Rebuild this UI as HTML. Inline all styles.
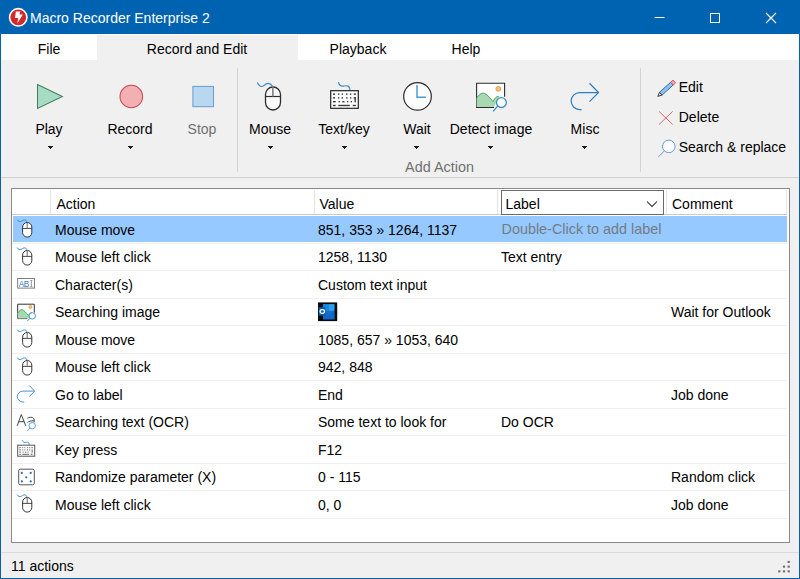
<!DOCTYPE html>
<html><head><meta charset="utf-8">
<style>
*{margin:0;padding:0;box-sizing:border-box}
html,body{width:800px;height:579px;overflow:hidden;background:#f0f0f0}
body{position:relative;font-family:"Liberation Sans",sans-serif;font-size:14px;color:#000}
.a{position:absolute}
.t{position:absolute;white-space:nowrap;line-height:16px;font-size:14px}
.c{text-align:center;width:120px}
svg{position:absolute;overflow:visible}
#title{left:0;top:0;width:800px;height:34px;background:#0063b1}
#bl{left:0;top:0;width:1px;height:579px;background:#0063b1}
#br{left:799px;top:0;width:1px;height:579px;background:#0063b1}
#bb{left:0;top:578px;width:800px;height:1px;background:#0063b1}
#tabs{left:1px;top:34px;width:798px;height:26px;background:#fff}
#tabsel{left:97px;top:35px;width:201px;height:26px;background:#f0f0f0}
#ribbot{left:1px;top:177px;width:798px;height:1px;background:#d0d0d0}
.sep{position:absolute;width:1px;background:#d3d3d3}
.dd{position:absolute;width:0;height:0;border-left:2.5px solid transparent;border-right:2.5px solid transparent;border-top:3px solid #1a1a1a}
#tbl{left:11px;top:188px;width:779px;height:355px;border:1px solid #8a8a8a;background:#fff}
.hsep{position:absolute;top:190px;width:1px;height:24px;background:#e5e5e5}
.row{position:absolute;left:12px;width:775px;height:1px;background:#f0f0f0}
#status{left:1px;top:552px;width:798px;height:1px;background:#dcdcdc}
</style></head><body>
<div class="a" id="title"></div>
<div class="a" id="bl"></div><div class="a" id="br"></div><div class="a" id="bb"></div>

<!-- app icon -->
<svg style="left:0;top:0" width="40" height="34">
  <circle cx="18.25" cy="17.35" r="8.7" fill="#d3292c" stroke="#fff" stroke-width="1.6"/>
  <path d="M15.9 11.6 L20.4 11.6 L19.3 14.5 L22.9 14.5 L17.3 23.5 L18.3 17.9 L15 17.9 Z" fill="#fff"/>
</svg>
<div class="t" style="left:30px;top:10px;font-size:14px;line-height:16px;color:#fff">Macro Recorder Enterprise 2</div>

<!-- window controls -->
<svg style="left:0;top:0" width="800" height="34">
  <line x1="654.5" y1="17.5" x2="664.5" y2="17.5" stroke="#fff" stroke-width="1"/>
  <rect x="710.5" y="13.5" width="9" height="9" fill="none" stroke="#fff" stroke-width="1"/>
  <path d="M766 13 L776 23 M776 13 L766 23" stroke="#fff" stroke-width="1.1"/>
</svg>

<!-- tabs -->
<div class="a" id="tabs"></div>
<div class="a" id="tabsel"></div>
<div class="t c" style="left:-11px;top:41px">File</div>
<div class="t c" style="left:137px;top:41px">Record and Edit</div>
<div class="t c" style="left:298px;top:41px">Playback</div>
<div class="t c" style="left:406px;top:41px">Help</div>

<!-- ribbon -->
<div class="a" id="ribbot"></div>
<div class="sep" style="left:237px;top:68px;height:104px"></div>
<div class="sep" style="left:640px;top:68px;height:104px"></div>

<!-- big icons -->
<svg style="left:0;top:0" width="800" height="180">
  <!-- play -->
  <path d="M37.5 84.5 L62.4 96.5 L37.5 108.5 Z" fill="#a7dbc3" stroke="#427f63" stroke-width="1.05"/>
  <!-- record -->
  <circle cx="131.3" cy="96.5" r="11.3" fill="#f2b0b2" stroke="#c9474c" stroke-width="1.05"/>
  <!-- stop -->
  <rect x="192.9" y="86.4" width="20.6" height="20.3" fill="#b9d8f0" stroke="#6c9fcf" stroke-width="1.05"/>
  <!-- mouse -->
  <rect x="265.5" y="87" width="15" height="23" rx="7.5" fill="#fafafa" stroke="#2e2e2e" stroke-width="1.3"/>
  <line x1="265.5" y1="96.5" x2="280.5" y2="96.5" stroke="#2e2e2e" stroke-width="1.2"/>
  <line x1="272.9" y1="87" x2="272.9" y2="96.5" stroke="#777" stroke-width="1.5"/>
  <path d="M257.3 82.6 C259 86.5 261.5 87.5 264 85.5 C266.5 83.5 269 81.5 272.9 86.6" fill="none" stroke="#3b8ccc" stroke-width="1.2"/>
  <!-- keyboard -->
  <rect x="330.7" y="90.7" width="27.6" height="17.6" fill="#fff" stroke="#222" stroke-width="1.2"/>
  <g fill="#3a3a3a">
    <rect x="332.9" y="93.4" width="2.2" height="1.4"/><rect x="337.9" y="93.4" width="1.4" height="1.4"/><rect x="341.6" y="93.4" width="1.4" height="1.4"/><rect x="346.1" y="93.4" width="1.4" height="1.4"/><rect x="349.9" y="93.4" width="1.4" height="1.4"/><rect x="353.7" y="93.4" width="2.2" height="1.4"/>
    <rect x="332.9" y="97.2" width="2.2" height="1.4"/><rect x="337.9" y="97.2" width="1.4" height="1.4"/><rect x="341.6" y="97.2" width="1.4" height="1.4"/><rect x="346.1" y="97.2" width="1.4" height="1.4"/><rect x="349.9" y="97.2" width="1.4" height="1.4"/><rect x="353.7" y="97.2" width="2.2" height="1.4"/><rect x="354.5" y="97.2" width="1.4" height="5.2"/>
    <rect x="332.9" y="101" width="2.8" height="1.4"/><rect x="338.5" y="101" width="1.4" height="1.4"/><rect x="342.3" y="101" width="2.2" height="1.4"/><rect x="346.9" y="101" width="1.4" height="1.4"/><rect x="350.6" y="101" width="1.4" height="1.4"/>
    <rect x="332.9" y="104.8" width="2.8" height="1.4"/><rect x="338.3" y="104.8" width="11.5" height="1.4"/><rect x="352.7" y="104.8" width="3.2" height="1.4"/>
  </g>
  <path d="M338.5 82.2 C339 85.5 341 86.6 344 86 C347 85.4 349.9 85.5 349.9 90" fill="none" stroke="#3b8ccc" stroke-width="1.2"/>
  <!-- clock -->
  <circle cx="417.5" cy="96.4" r="13.8" fill="#fdfdfd" stroke="#2a2a2a" stroke-width="1.2"/>
  <path d="M417 85 L417 97.2 L426 97.2" fill="none" stroke="#4b9ad3" stroke-width="1.5"/>
  <!-- detect image -->
  <path d="M504.6 96.7 L504.6 83.3 L476.6 83.3 L476.6 107.5 L494 107.5" fill="#fff" stroke="#2b2b2b" stroke-width="1.1"/>
  <path d="M476.6 98.2 C479 94.5 481.5 93 483.5 93.2 C486.5 93.4 490 98 493 101.8 C494.5 98 496.5 96.3 499.2 96.4 L497 101 L494 107 L476.6 107 Z" fill="#a9d9b3"/>
  <path d="M476.6 98.2 C479 94.5 481.5 93 483.5 93.2 C486.5 93.4 490 98 493 101.8 M493 101.8 C494.5 98 496.5 96.3 499.2 96.4" fill="none" stroke="#3ca356" stroke-width="1"/>
  <circle cx="498.3" cy="88.8" r="2.4" fill="#f9c27a" stroke="#e9913f" stroke-width="0.9"/>
  <circle cx="501.4" cy="102.6" r="4.9" fill="#fff" stroke="#3a8cc8" stroke-width="1.3"/>
  <line x1="497.6" y1="106.2" x2="493.2" y2="111.4" stroke="#3a8cc8" stroke-width="1.3"/>
  <!-- misc arrow -->
  <path d="M581.6 109.5 L579.6 109.5 A8.45 8.45 0 0 1 579.6 92.6 L598.3 92.6 M589.5 83.3 L598.5 92.6 L589.5 101.6" fill="none" stroke="#2d7dc4" stroke-width="1.25"/>
  <!-- pencil -->
  <g transform="translate(666.4 88.6) rotate(-42)">
    <rect x="-7.6" y="-1.9" width="15" height="3.8" fill="#88c4f4" stroke="#2f5f90" stroke-width="0.85"/>
    <rect x="7.4" y="-1.9" width="3.2" height="3.8" fill="#f5a0a6" stroke="#c9545c" stroke-width="0.85"/>
    <path d="M-7.6 -1.9 L-11.6 0 L-7.6 1.9 Z" fill="#e0dccf" stroke="#333" stroke-width="0.85"/>
  </g>
  <!-- delete x -->
  <path d="M659 111.4 L672.7 124.5 M672.7 111.4 L659 124.5" stroke="#d95a5c" stroke-width="0.9"/>
  <!-- search -->
  <circle cx="668.8" cy="146.4" r="6.3" fill="#fff" stroke="#5a9ad4" stroke-width="0.95"/>
  <line x1="664.4" y1="150.9" x2="658.3" y2="156.9" stroke="#5a9ad4" stroke-width="0.95"/>
</svg>

<div class="t c" style="left:-11px;top:121px">Play</div>
<svg style="left:48px;top:146px" width="5" height="3" shape-rendering="crispEdges"><rect x="0" y="0" width="5" height="1" fill="#1a1a1a"/><rect x="1" y="1" width="3" height="1" fill="#1a1a1a"/><rect x="2" y="2" width="1" height="1" fill="#1a1a1a"/></svg>
<div class="t c" style="left:70px;top:121px">Record</div>
<svg style="left:128px;top:146px" width="5" height="3" shape-rendering="crispEdges"><rect x="0" y="0" width="5" height="1" fill="#1a1a1a"/><rect x="1" y="1" width="3" height="1" fill="#1a1a1a"/><rect x="2" y="2" width="1" height="1" fill="#1a1a1a"/></svg>
<div class="t c" style="left:142px;top:121px;color:#707070">Stop</div>
<div class="t c" style="left:210px;top:121px">Mouse</div>
<svg style="left:268px;top:146px" width="5" height="3" shape-rendering="crispEdges"><rect x="0" y="0" width="5" height="1" fill="#1a1a1a"/><rect x="1" y="1" width="3" height="1" fill="#1a1a1a"/><rect x="2" y="2" width="1" height="1" fill="#1a1a1a"/></svg>
<div class="t c" style="left:284px;top:121px">Text/key</div>
<svg style="left:342px;top:146px" width="5" height="3" shape-rendering="crispEdges"><rect x="0" y="0" width="5" height="1" fill="#1a1a1a"/><rect x="1" y="1" width="3" height="1" fill="#1a1a1a"/><rect x="2" y="2" width="1" height="1" fill="#1a1a1a"/></svg>
<div class="t c" style="left:357px;top:121px">Wait</div>
<svg style="left:414px;top:146px" width="5" height="3" shape-rendering="crispEdges"><rect x="0" y="0" width="5" height="1" fill="#1a1a1a"/><rect x="1" y="1" width="3" height="1" fill="#1a1a1a"/><rect x="2" y="2" width="1" height="1" fill="#1a1a1a"/></svg>
<div class="t c" style="left:431px;top:121px">Detect image</div>
<svg style="left:488px;top:146px" width="5" height="3" shape-rendering="crispEdges"><rect x="0" y="0" width="5" height="1" fill="#1a1a1a"/><rect x="1" y="1" width="3" height="1" fill="#1a1a1a"/><rect x="2" y="2" width="1" height="1" fill="#1a1a1a"/></svg>
<div class="t c" style="left:525px;top:121px">Misc</div>
<svg style="left:582px;top:146px" width="5" height="3" shape-rendering="crispEdges"><rect x="0" y="0" width="5" height="1" fill="#1a1a1a"/><rect x="1" y="1" width="3" height="1" fill="#1a1a1a"/><rect x="2" y="2" width="1" height="1" fill="#1a1a1a"/></svg>
<div class="t c" style="left:379.5px;top:159px;color:#707070;font-size:14.4px">Add Action</div>

<div class="t" style="left:678.75px;top:79px">Edit</div>
<div class="t" style="left:678.75px;top:109px">Delete</div>
<div class="t" style="left:678.75px;top:139px">Search &amp; replace</div>

<!-- table -->
<div class="a" id="tbl"></div>
<div class="a" style="left:13px;top:216px;width:774px;height:26px;background:#96c9ff"></div>
<div class="a" style="left:12px;top:214px;width:775px;height:1px;background:#cbcbcb"></div>
<div class="hsep" style="left:50px"></div>
<div class="hsep" style="left:314px"></div>
<div class="hsep" style="left:497px"></div>
<div class="hsep" style="left:666px"></div>
<div class="hsep" style="left:786px"></div>
<div class="a" style="left:501px;top:190px;width:163px;height:25px;border:1px solid #6a6a6a;background:#fff"></div>
<svg style="left:0;top:0" width="800" height="220"><path d="M647 201.5 L652 206.5 L657 201.5" fill="none" stroke="#1a1a1a" stroke-width="1.05"/></svg>
<div class="t" style="left:56.5px;top:196px">Action</div>
<div class="t" style="left:319.5px;top:196px">Value</div>
<div class="t" style="left:505.5px;top:196px">Label</div>
<div class="t" style="left:672px;top:196px">Comment</div>
<div class="row" style="top:242.5px"></div>
<div class="row" style="top:270.0px"></div>
<div class="row" style="top:297.5px"></div>
<div class="row" style="top:325.0px"></div>
<div class="row" style="top:352.5px"></div>
<div class="row" style="top:380.0px"></div>
<div class="row" style="top:407.5px"></div>
<div class="row" style="top:435.0px"></div>
<div class="row" style="top:462.5px"></div>
<div class="row" style="top:490.0px"></div>
<div class="row" style="top:517.5px"></div>
<div class="t" style="left:55px;top:221.5px">Mouse move</div>
<div class="t" style="left:318px;top:221.5px">851, 353 » 1264, 1137</div>
<div class="t" style="left:55px;top:249.0px">Mouse left click</div>
<div class="t" style="left:318px;top:249.0px">1258, 1130</div>
<div class="t" style="left:501px;top:249.0px">Text entry</div>
<div class="t" style="left:55px;top:276.5px">Character(s)</div>
<div class="t" style="left:318px;top:276.5px">Custom text input</div>
<div class="t" style="left:55px;top:304.0px">Searching image</div>
<div class="t" style="left:671px;top:304.0px">Wait for Outlook</div>
<div class="t" style="left:55px;top:331.5px">Mouse move</div>
<div class="t" style="left:318px;top:331.5px">1085, 657 » 1053, 640</div>
<div class="t" style="left:55px;top:359.0px">Mouse left click</div>
<div class="t" style="left:318px;top:359.0px">942, 848</div>
<div class="t" style="left:55px;top:386.5px">Go to label</div>
<div class="t" style="left:318px;top:386.5px">End</div>
<div class="t" style="left:671px;top:386.5px">Job done</div>
<div class="t" style="left:55px;top:414.0px">Searching text (OCR)</div>
<div class="t" style="left:318px;top:414.0px">Some text to look for</div>
<div class="t" style="left:501px;top:414.0px">Do OCR</div>
<div class="t" style="left:55px;top:441.5px">Key press</div>
<div class="t" style="left:318px;top:441.5px">F12</div>
<div class="t" style="left:55px;top:469.0px">Randomize parameter (X)</div>
<div class="t" style="left:318px;top:469.0px">0 - 115</div>
<div class="t" style="left:671px;top:469.0px">Random click</div>
<div class="t" style="left:55px;top:496.5px">Mouse left click</div>
<div class="t" style="left:318px;top:496.5px">0, 0</div>
<div class="t" style="left:671px;top:496.5px">Job done</div>
<div class="t" style="left:501.5px;top:221px;color:#747b84;font-size:14.4px">Double-Click to add label</div>
<!-- row icons -->
<svg style="left:0;top:215.0px" width="50" height="28"><rect x="22.6" y="7.5" width="9.2" height="14.6" rx="4.6" fill="#fff" stroke="#333" stroke-width="1"/>
<line x1="22.6" y1="13.4" x2="31.8" y2="13.4" stroke="#333" stroke-width="0.9"/>
<line x1="27.2" y1="7.5" x2="27.2" y2="13.4" stroke="#666" stroke-width="1"/>
<path d="M17.2 4.6 C18.3 6.6 19.7 7.2 21.6 6.1 C23.6 4.9 25.6 3.6 27.2 7.3" fill="none" stroke="#3b8ccc" stroke-width="1"/></svg>
<svg style="left:0;top:242.5px" width="50" height="28"><rect x="22.6" y="7.5" width="9.2" height="14.6" rx="4.6" fill="#fff" stroke="#333" stroke-width="1"/>
<line x1="22.6" y1="13.4" x2="31.8" y2="13.4" stroke="#333" stroke-width="0.9"/>
<line x1="27.2" y1="7.5" x2="27.2" y2="13.4" stroke="#666" stroke-width="1"/>
<path d="M17.2 4.6 C18.3 6.6 19.7 7.2 21.6 6.1 C23.6 4.9 25.6 3.6 27.2 7.3" fill="none" stroke="#3b8ccc" stroke-width="1"/></svg>
<svg style="left:0;top:270.0px" width="50" height="28"><rect x="17.7" y="8.5" width="16.8" height="9.6" fill="#fff" stroke="#707070" stroke-width="0.9"/>
<text x="18.7" y="16.7" font-family="Liberation Sans" font-size="8.2" fill="#3a7cc0" letter-spacing="-0.3">AB</text>
<path d="M30.3 10.6 L32.5 10.6 M31.4 10.6 L31.4 16.6 M30.3 16.6 L32.5 16.6" fill="none" stroke="#808080" stroke-width="0.8"/></svg>
<svg style="left:0;top:297.5px" width="50" height="28"><path d="M34.3 14.6 L34.3 6.2 L17.7 6.2 L17.7 20.6 L27.5 20.6" fill="#fff" stroke="#333" stroke-width="1"/>
<path d="M17.7 15 C19.5 12.5 21 11.5 22.3 11.7 C24 12 25.5 14.3 28.5 17.5 C29.5 15.3 30.5 14.8 32 14.8 L29 20.6 L17.7 20.6 Z" fill="#a9d9b3"/>
<path d="M17.7 15 C19.5 12.5 21 11.5 22.3 11.7 C24 12 25.5 14.3 28.5 17.5 M28.5 17.5 C29.5 15.3 30.5 14.8 32 14.8" fill="none" stroke="#3ca356" stroke-width="0.9"/>
<circle cx="30.4" cy="9.1" r="1.5" fill="#f9c27a" stroke="#e9913f" stroke-width="0.7"/>
<circle cx="32.3" cy="17.9" r="3.2" fill="#fff" stroke="#3a8cc8" stroke-width="0.9"/>
<line x1="29.9" y1="20.3" x2="27.3" y2="23.1" stroke="#3a8cc8" stroke-width="0.9"/></svg>
<svg style="left:0;top:325.0px" width="50" height="28"><rect x="22.6" y="7.5" width="9.2" height="14.6" rx="4.6" fill="#fff" stroke="#333" stroke-width="1"/>
<line x1="22.6" y1="13.4" x2="31.8" y2="13.4" stroke="#333" stroke-width="0.9"/>
<line x1="27.2" y1="7.5" x2="27.2" y2="13.4" stroke="#666" stroke-width="1"/>
<path d="M17.2 4.6 C18.3 6.6 19.7 7.2 21.6 6.1 C23.6 4.9 25.6 3.6 27.2 7.3" fill="none" stroke="#3b8ccc" stroke-width="1"/></svg>
<svg style="left:0;top:352.5px" width="50" height="28"><rect x="22.6" y="7.5" width="9.2" height="14.6" rx="4.6" fill="#fff" stroke="#333" stroke-width="1"/>
<line x1="22.6" y1="13.4" x2="31.8" y2="13.4" stroke="#333" stroke-width="0.9"/>
<line x1="27.2" y1="7.5" x2="27.2" y2="13.4" stroke="#666" stroke-width="1"/>
<path d="M17.2 4.6 C18.3 6.6 19.7 7.2 21.6 6.1 C23.6 4.9 25.6 3.6 27.2 7.3" fill="none" stroke="#3b8ccc" stroke-width="1"/></svg>
<svg style="left:0;top:380.0px" width="50" height="28"><path d="M24.2 22 L22.85 22 A5.45 5.45 0 0 1 22.85 11.1 L34.5 11.1 M29.4 5.6 L34.6 11.1 L29.4 16.6" fill="none" stroke="#3f8ad0" stroke-width="0.95"/></svg>
<svg style="left:0;top:407.5px" width="50" height="28"><path d="M17.2 17.9 L21.3 6.5 L25.8 17.9 M18.6 13.7 L24.2 13.7" fill="none" stroke="#333" stroke-width="0.9"/>
<path d="M27.3 10.2 C29 9 32.5 8.8 33.6 10.3 C34.3 11.3 34.2 12.5 34.2 14.3 M34 12.8 C31 12.8 28.5 13 27.5 14.8" fill="none" stroke="#333" stroke-width="0.9"/>
<circle cx="32.2" cy="17.7" r="3.2" fill="#fff" stroke="#4a98cf" stroke-width="0.9"/>
<line x1="29.9" y1="20.1" x2="27.3" y2="23" stroke="#4a98cf" stroke-width="0.9"/></svg>
<svg style="left:0;top:435.0px" width="50" height="28"><rect x="17.7" y="10.2" width="17" height="11" fill="#fff" stroke="#555" stroke-width="1"/>
<g fill="#666"><rect x="19.3" y="12.2" width="1.6" height="1"/><rect x="22.2" y="12.2" width="1" height="1"/><rect x="24.4" y="12.2" width="1" height="1"/><rect x="27" y="12.2" width="1" height="1"/><rect x="29.2" y="12.2" width="1" height="1"/><rect x="31.4" y="12.2" width="1.4" height="1"/>
<rect x="19.3" y="14.4" width="1.6" height="1"/><rect x="22.2" y="14.4" width="1" height="1"/><rect x="24.4" y="14.4" width="1" height="1"/><rect x="27" y="14.4" width="1" height="1"/><rect x="29.2" y="14.4" width="1" height="1"/><rect x="31.6" y="14.4" width="1" height="3.4"/>
<rect x="19.3" y="16.6" width="1.6" height="1"/><rect x="22.6" y="16.6" width="1" height="1"/><rect x="25" y="16.6" width="1.4" height="1"/><rect x="27.6" y="16.6" width="1" height="1"/>
<rect x="19.3" y="18.8" width="1.6" height="1"/><rect x="22.2" y="18.8" width="6.8" height="1"/><rect x="30.6" y="18.8" width="2" height="1"/></g>
<path d="M22.4 5.2 C22.8 7.3 24.5 7.7 26.5 7.3 C28.5 6.9 29.1 7.6 29.1 10" fill="none" stroke="#3b8ccc" stroke-width="0.9"/></svg>
<svg style="left:0;top:462.5px" width="50" height="28"><rect x="18.7" y="6.2" width="15.6" height="15.6" rx="1.5" fill="#fff" stroke="#555" stroke-width="1"/>
<g fill="#2a6fa8"><circle cx="21.8" cy="9.9" r="1.1"/><circle cx="30.7" cy="9.9" r="1.1"/><circle cx="26.2" cy="14.3" r="1.1"/><circle cx="21.8" cy="18.4" r="1.1"/><circle cx="30.7" cy="18.4" r="1.1"/></g></svg>
<svg style="left:0;top:490.0px" width="50" height="28"><rect x="22.6" y="7.5" width="9.2" height="14.6" rx="4.6" fill="#fff" stroke="#333" stroke-width="1"/>
<line x1="22.6" y1="13.4" x2="31.8" y2="13.4" stroke="#333" stroke-width="0.9"/>
<line x1="27.2" y1="7.5" x2="27.2" y2="13.4" stroke="#666" stroke-width="1"/>
<path d="M17.2 4.6 C18.3 6.6 19.7 7.2 21.6 6.1 C23.6 4.9 25.6 3.6 27.2 7.3" fill="none" stroke="#3b8ccc" stroke-width="1"/></svg>
<svg style="left:0;top:297.5px" width="400" height="28">
<rect x="318" y="4.4" width="19.2" height="18.7" fill="#0b0b0b"/>
<rect x="323" y="6.2" width="11.4" height="15.1" fill="#1570d0"/>
<rect x="328.5" y="6.2" width="5.9" height="6.5" fill="#2fa0ec"/>
<rect x="323" y="6.2" width="5.5" height="6.5" fill="#1a86e0"/>
<path d="M323 12.7 L328.7 17 L334.4 12.7 L334.4 21.3 L323 21.3 Z" fill="#1366c4"/>
<rect x="318.8" y="9.3" width="6.6" height="8.3" fill="#0c5fb4"/>
<ellipse cx="322.3" cy="13.5" rx="2.2" ry="1.8" fill="none" stroke="#fff" stroke-width="1.2"/>
<rect x="337.2" y="11" width="1" height="5" fill="#ccc"/></svg>
<div class="a" id="status"></div>
<div class="t" style="left:11px;top:558px">11 actions</div>
<svg style="left:0;top:0" width="800" height="579"><g fill="#6f6f6f">
<rect x="787.6" y="560.9" width="2.2" height="2.1"/>
<rect x="782.9" y="565.6" width="2.2" height="2.1"/><rect x="787.6" y="565.6" width="2.2" height="2.1"/>
<rect x="778.2" y="570.3" width="2.2" height="2.1"/><rect x="782.9" y="570.3" width="2.2" height="2.1"/><rect x="787.6" y="570.3" width="2.2" height="2.1"/>
</g></svg>
</body></html>
